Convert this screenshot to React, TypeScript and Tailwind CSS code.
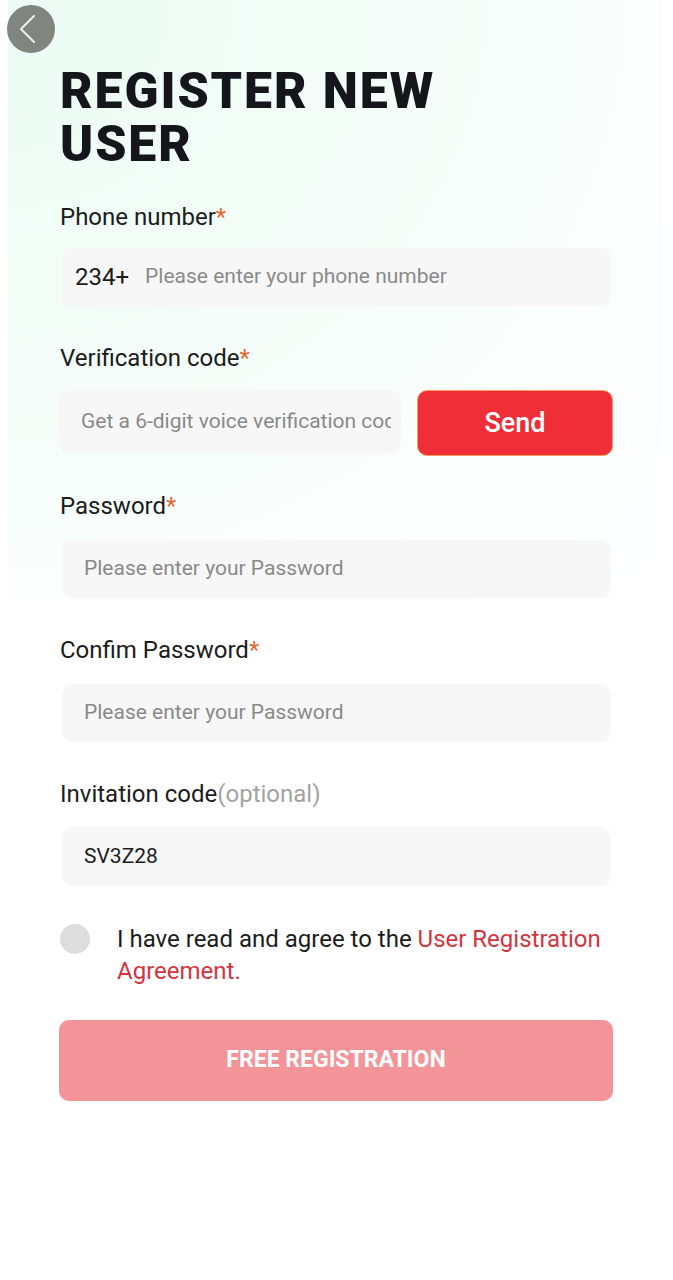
import React from "react";

const font = { fontFamily: "Roboto, 'Noto Sans', 'Liberation Sans', sans-serif" };

function Label({ text, optional, required = true }: { text: string; optional?: boolean; required?: boolean }) {
  return (
    <div className="text-[24px] leading-[30px] text-[#1c1c1c]">
      {text}
      {required && <span className="text-[#e8652f]">*</span>}
      {optional && <span className="text-[#a3a3a3]">(optional)</span>}
    </div>
  );
}

function Field({ children, className = "" }: { children: React.ReactNode; className?: string }) {
  return (
    <div className={`ml-[2px] w-[549px] h-[58px] rounded-[10px] bg-[#f7f7f7] flex items-center ${className}`}>
      {children}
    </div>
  );
}

export default function App() {
  return (
    <div
      className="relative w-[673px] min-h-[1280px] bg-white overflow-hidden"
      style={font}
    >
      <div className="absolute left-[8px] top-0 w-[654px] h-[600px] rounded-br-[60px] bg-[radial-gradient(ellipse_at_top_left,#ecfcf5_0%,#f4fdf9_45%,#fbfefd_75%,#ffffff_100%)]" />
      <div className="relative">
        <div className="pt-[5px] pl-[7px]">
          <div className="w-[48px] h-[48px] rounded-full bg-[#80857f] flex items-center justify-center">
            <svg width="48" height="48" viewBox="0 0 48 48">
              <path d="M27 11 L14 24 L27 37" fill="none" stroke="#eeeeee" strokeWidth="2" strokeLinecap="round" strokeLinejoin="round" />
            </svg>
          </div>
        </div>
        <div className="pl-[60px]">
          <h1 className="mt-[12px] text-[50px] leading-[53px] font-black tracking-[1.9px] text-[#14161c]">
            REGISTER NEW
            <br />
            USER
          </h1>

          <div className="mt-[31px]">
            <Label text="Phone number" />
          </div>
          <Field className="mt-[16px]">
            <span className="pl-[13px] text-[24px] text-[#1c1c1c]">234+</span>
            <span className="pl-[16px] text-[21px] text-[#8a8a8a]">Please enter your phone number</span>
          </Field>

          <div className="mt-[37px]">
            <Label text="Verification code" />
          </div>
          <div className="mt-[17px] flex items-start">
            <div className="-ml-[1px] w-[342px] h-[63px] rounded-[10px] bg-[#f7f7f7] flex items-center pl-[22px] pr-[10px]">
              <div className="flex-1 overflow-hidden">
                <span className="text-[21px] text-[#8a8a8a] whitespace-nowrap">Get a 6-digit voice verification code</span>
              </div>
            </div>
            <button className="ml-[16px] w-[196px] h-[66px] rounded-[10px] bg-[#ef2e37] border border-[#f4a060] text-white text-[27px] font-medium">
              Send
            </button>
          </div>

          <div className="mt-[35px]">
            <Label text="Password" />
          </div>
          <Field className="mt-[19px]">
            <span className="pl-[22px] text-[21px] text-[#8a8a8a]">Please enter your Password</span>
          </Field>

          <div className="mt-[37px]">
            <Label text="Confim Password" />
          </div>
          <Field className="mt-[19px]">
            <span className="pl-[22px] text-[21px] text-[#8a8a8a]">Please enter your Password</span>
          </Field>

          <div className="mt-[37px]">
            <Label text="Invitation code" optional required={false} />
          </div>
          <Field className="mt-[18px] h-[59px]">
            <span className="pl-[22px] text-[21px] text-[#1c1c1c]">SV3Z28</span>
          </Field>

          <div className="mt-[37px] flex items-start">
            <div className="mt-[1px] w-[30px] h-[30px] rounded-full bg-[#dddddd] shrink-0" />
            <p className="ml-[27px] w-[500px] text-[24px] leading-[32px] text-[#1c1c1c]">
              I have read and agree to the <span className="text-[#d4343f]">User Registration Agreement.</span>
            </p>
          </div>

          <button className="mt-[33px] -ml-[1px] w-[554px] h-[81px] rounded-[10px] bg-[#f39499] text-white text-[23px] font-bold flex items-center justify-center">
            FREE REGISTRATION
          </button>
        </div>
      </div>
    </div>
  );
}
